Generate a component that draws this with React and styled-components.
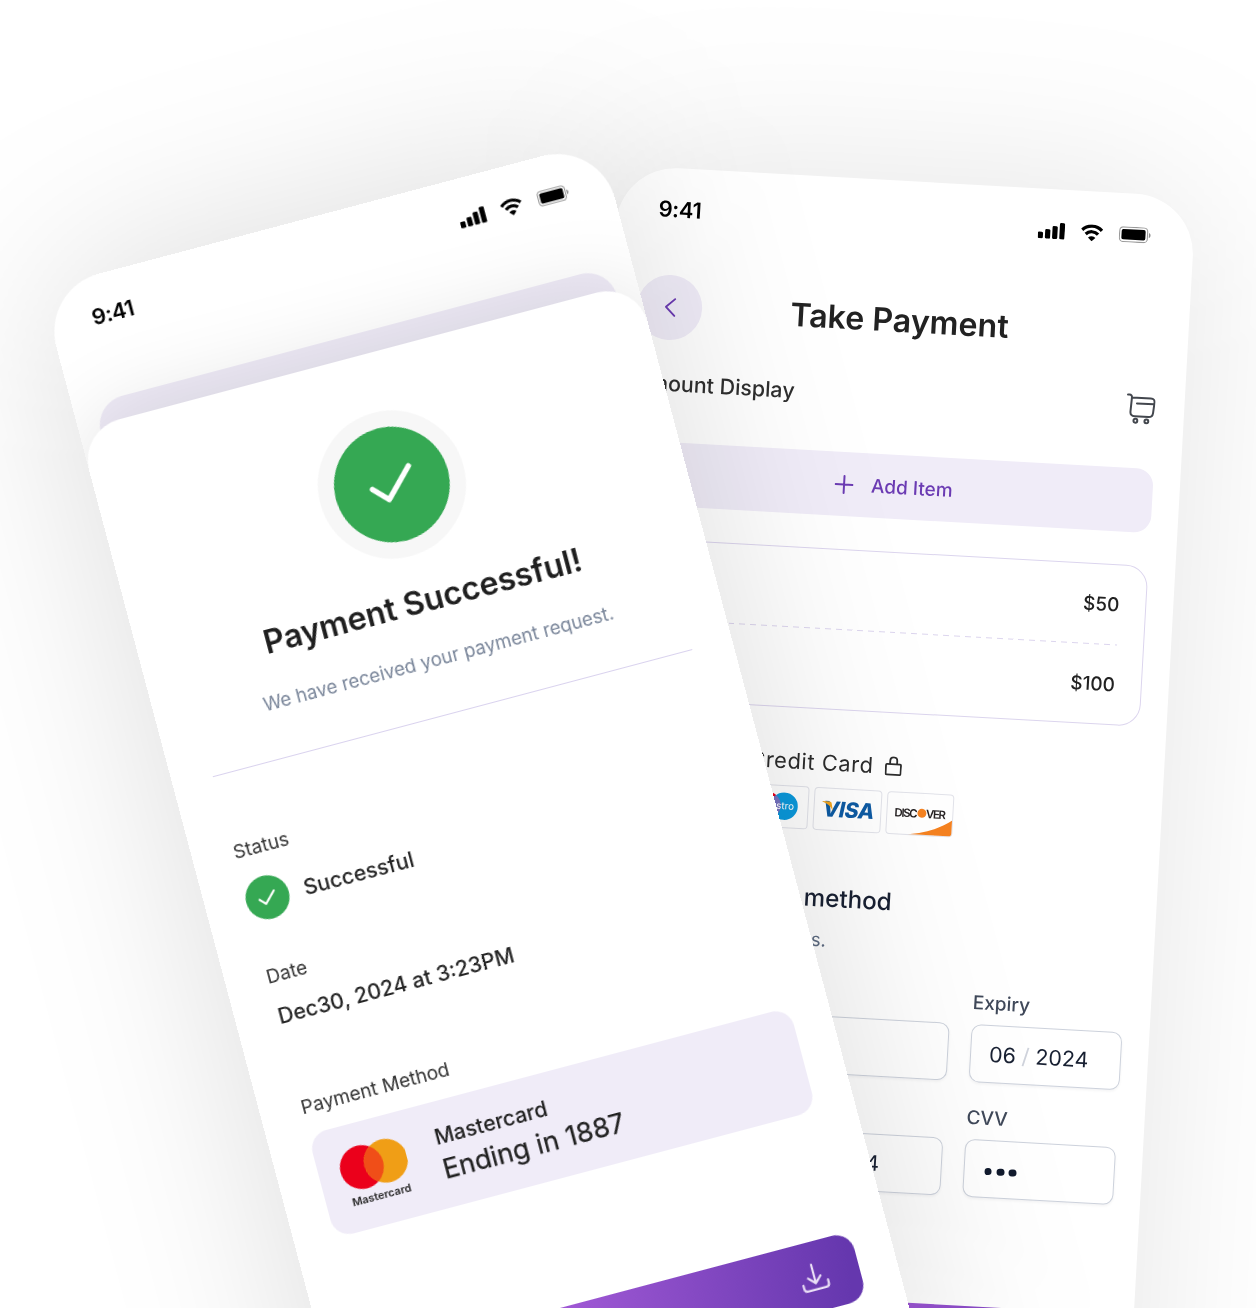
import React from 'react';
import styled, { createGlobalStyle } from 'styled-components';

const GlobalStyle = createGlobalStyle`
  * { box-sizing: border-box; }
  html, body { margin: 0; padding: 0; background: #fff; overflow: hidden; }
  body { font-family: Inter, "Liberation Sans", sans-serif; -webkit-font-smoothing: antialiased; }
`;

const Stage = styled.main`
  position: relative;
  width: 1256px;
  height: 1308px;
  overflow: hidden;
  background: #fff;
`;

const Device = styled.section`
  position: absolute;
  left: ${(p) => p.$x}px;
  top: ${(p) => p.$y}px;
  width: 577.5px;
  height: 1290px;
  transform-origin: 0 0;
  transform: rotate(${(p) => p.$angle}deg);
`;

const DeviceShadow = styled.div`
  position: absolute;
  inset: 0;
  border-radius: 60px;
  background: rgba(0, 0, 0, ${(p) => p.$shade});
  filter: blur(${(p) => p.$blur}px);
  will-change: transform, filter;
`;

const Phone = styled.div`
  position: relative;
  width: 100%;
  height: 100%;
  border-radius: 60px;
  overflow: hidden;
  display: flex;
  flex-direction: column;
  background: #fff;
`;

const StatusBar = styled.header`
  flex: none;
  height: 82px;
  padding: 0 42.5px 0 42px;
  display: flex;
  align-items: center;
  justify-content: space-between;
  color: #000;
`;

const Time = styled.span`
  font-size: 22px;
  font-weight: 600;
  letter-spacing: -0.4px;
`;

const StatusIcons = styled.div`
  display: flex;
  align-items: center;
  gap: 16px;
  svg { display: block; }
`;

/* ---------- Success phone ---------- */

const BackSheet = styled.div`
  flex: none;
  height: 80px;
  margin: 42px 23px 0 21px;
  border-radius: 30px 30px 0 0;
  background: #efebf7;
`;

const Sheet = styled.div`
  flex: 1;
  margin-top: -58.5px;
  padding: 59px 41px 0;
  border-radius: 42px 42px 0 0;
  background: #fff;
  box-shadow: 0 0 90px rgba(0, 0, 0, 0.12);
  display: flex;
  flex-direction: column;
`;

const Seal = styled.div`
  flex: none;
  align-self: center;
  width: ${(p) => p.$size}px;
  height: ${(p) => p.$size}px;
  border-radius: 50%;
  border: ${(p) => p.$ring || 0}px solid #f7f7f7;
  background: #35a853;
  background-clip: padding-box;
  display: grid;
  place-items: center;
`;

const SuccessTitle = styled.h1`
  margin: 27.7px 0 0;
  font-size: 32.2px;
  line-height: 40px;
  font-weight: 600;
  text-align: center;
  color: #1f1f1f;
  white-space: nowrap;
`;

const SuccessNote = styled.p`
  margin: 26.3px 0 0;
  padding-left: 1px;
  font-size: 18.7px;
  line-height: 28px;
  text-align: center;
  color: #7a869a;
  white-space: nowrap;
`;

const Divider = styled.hr`
  width: 100%;
  height: 1px;
  flex: none;
  margin: 41px 0 0;
  border: 0;
  background: #d9d2ee;
`;

const Label = styled.div`
  margin-top: ${(p) => p.$top}px;
  padding-left: 0.6px;
  font-size: 19.05px;
  line-height: 24px;
  color: #333;
`;

const Value = styled.div`
  margin-top: ${(p) => p.$top || 0}px;
  padding-left: ${(p) => p.$indent || 0}px;
  font-size: 21.4px;
  line-height: 28px;
  font-weight: 500;
  color: #262626;
`;

const StatusRow = styled.div`
  margin-top: 17px;
  display: flex;
  align-items: center;
  gap: 16px;
`;

const MethodCard = styled.div`
  flex: none;
  margin: 15.4px -2.5px 0 0.2px;
  height: 107px;
  padding-left: 21.5px;
  border-radius: 19px;
  background: #f0ecf8;
  display: flex;
  align-items: center;
  gap: 31.5px;
`;

const Brand = styled.div`
  display: flex;
  flex-direction: column;
  align-items: center;
  svg { display: block; }
`;

const BrandName = styled.span`
  margin-top: 3px;
  font-size: 11px;
  line-height: 14px;
  font-weight: 600;
  color: #262626;
`;

const CardName = styled.div`
  font-size: 21.3px;
  line-height: 30px;
  font-weight: 500;
  color: #222;
`;

const CardEnding = styled.div`
  margin-top: 1px;
  font-size: 27.3px;
  line-height: 36px;
  color: #222;
  -webkit-text-stroke: 0.25px #222;
`;

const PrimaryButton = styled.div`
  flex: none;
  margin: ${(p) => p.$margin};
  height: 70px;
  padding-right: 31.3px;
  border-radius: 19px;
  background: linear-gradient(${(p) => p.$stops});
  display: flex;
  align-items: center;
  justify-content: flex-end;
`;

/* ---------- Take-payment phone ---------- */

const TopBar = styled.div`
  flex: none;
  margin-top: 24.8px;
  padding: 0 26.4px;
  display: grid;
  grid-template-columns: 65px 1fr 65px;
  align-items: center;
`;

const BackButton = styled.div`
  width: 65px;
  height: 65px;
  border-radius: 50%;
  background: #f0ecf8;
  display: grid;
  place-items: center;
`;

const ScreenTitle = styled.h2`
  margin: 0;
  padding-top: 2px;
  font-size: 32.2px;
  line-height: 40px;
  font-weight: 600;
  text-align: center;
  color: #222;
  white-space: nowrap;
`;

const Body = styled.div`
  flex: 1;
  padding: 0 27px;
  display: flex;
  flex-direction: column;
`;

const AmountRow = styled.div`
  margin-top: 28px;
  height: 30px;
  padding-right: 1.5px;
  display: flex;
  align-items: center;
  justify-content: space-between;
`;

const AmountLabel = styled.span`
  font-size: 21.4px;
  font-weight: 500;
  color: #2e2e2e;
`;

const AddItem = styled.div`
  margin-top: 44.2px;
  height: 64px;
  border-radius: 17px;
  background: #f0ecf8;
  display: flex;
  align-items: center;
  justify-content: center;
  padding: 0.5px 0 0 7px;
  gap: 17.3px;
  font-size: 19px;
  font-weight: 500;
  color: #6b3bb3;
`;

const ItemList = styled.div`
  margin-top: 33px;
  height: 161.5px;
  padding: 0 25.4px 0 25px;
  border: 1.3px solid #dcd5ee;
  border-radius: 22px;
  display: flex;
  flex-direction: column;
`;

const ItemRow = styled.div`
  flex: 1;
  display: flex;
  align-items: center;
  justify-content: flex-end;
  font-size: 19px;
  font-weight: 500;
  color: #222;
`;

const DashedRule = styled.div`
  height: 1.1px;
  margin-top: -1px;
  background: repeating-linear-gradient(
    270deg,
    #dcd5ee 0 2px,
    transparent 2px 7px,
    #dcd5ee 7px 10.75px
  );
`;

const CreditHeader = styled.div`
  margin-top: 38.8px;
  padding-left: 37.3px;
  height: 28px;
  display: flex;
  align-items: center;
  gap: 11px;
  font-size: 21.8px;
  letter-spacing: 0.6px;
  color: #2b2b2b;
`;

const Badges = styled.div`
  margin: 10.3px 0 0 58.5px;
  display: flex;
  gap: 5.2px;
`;

const Badge = styled.div`
  width: 67.3px;
  height: 43px;
  border: 1.3px solid #e2e3ea;
  border-radius: 4px;
  overflow: hidden;
  display: grid;
  place-items: center;
  > * { grid-area: 1 / 1; }
  > svg { display: block; }
`;

const MaestroName = styled.span`
  font-size: 9.8px;
  line-height: 12px;
  color: #fff;
`;

const VisaName = styled.span`
  padding: 0 0 0.5px 1px;
  font-size: 21.4px;
  line-height: 24px;
  font-weight: 800;
  font-style: italic;
  letter-spacing: -0.4px;
  color: #0d5aa3;
`;

const DiscoverName = styled.span`
  padding: 0 1.5px 1.5px 0;
  display: flex;
  align-items: center;
  font-size: 11.4px;
  line-height: 14px;
  font-weight: 600;
  letter-spacing: -1.35px;
  color: #262223;
`;

const DiscoverBall = styled.i`
  width: 9px;
  height: 9px;
  margin: 0 -0.2px 0 1px;
  border-radius: 50%;
  background: #f58220;
`;

const MethodTitle = styled.h3`
  margin: 52px 0 0;
  font-size: 24.25px;
  line-height: 32px;
  font-weight: 500;
  color: #182032;
`;

const MethodNote = styled.p`
  margin: 12px 0 0;
  font-size: 18.75px;
  line-height: 28px;
  color: #5d6b82;
`;

const Fields = styled.div`
  margin-top: 28.6px;
  display: grid;
  grid-template-columns: 1fr 150.5px;
  column-gap: 22px;
  row-gap: 24px;
`;

const FieldLabel = styled.div`
  font-size: 19px;
  line-height: 24px;
  font-weight: 500;
  color: #3f4859;
`;

const Input = styled.div`
  margin-top: 9px;
  height: 58px;
  padding: 0 ${(p) => p.$end || 0}px 0 ${(p) => p.$pad || 18}px;
  border: 1.3px solid #cdd2dc;
  border-radius: 10px;
  box-shadow: 0 1.5px 3px rgba(16, 24, 40, 0.05);
  background: ${(p) => (p.$clear ? 'transparent' : '#fff')};
  display: flex;
  align-items: center;
  justify-content: ${(p) => (p.$end ? 'flex-end' : 'flex-start')};
  gap: ${(p) => p.$gap || 0}px;
  font-size: 21.4px;
  color: #182032;
`;

const Slash = styled.span`
  color: #cfd3dc;
`;

const Dot = styled.i`
  width: 7.4px;
  height: 7.4px;
  margin-top: 5px;
  border-radius: 50%;
  background: #111a2d;
`;

/* ---------- Icons ---------- */

const SignalIcon = () => (
  <svg width="27" height="17" viewBox="0 0 27 17">
    <rect x="0" y="10" width="5.2" height="6.6" rx="1.3" />
    <rect x="7.2" y="7.2" width="5.2" height="9.4" rx="1.3" />
    <rect x="14.4" y="3.8" width="5.2" height="12.8" rx="1.3" />
    <rect x="21.6" y="0.3" width="5.2" height="16.3" rx="1.3" />
  </svg>
);

const WifiIcon = () => (
  <svg width="22" height="17" viewBox="0 0 22 17" fill="none" stroke="#000" strokeWidth="3.2">
    <path d="M1.1 5.9A13.9 13.9 0 0 1 20.9 5.9" />
    <path d="M4.8 9.9A8.7 8.7 0 0 1 17.2 9.9" />
    <path d="M11 16.9L7.3 13.3A5.2 5.2 0 0 1 14.7 13.3Z" fill="#000" stroke="none" />
  </svg>
);

const BatteryIcon = () => (
  <svg width="32" height="16" viewBox="0 0 32 16">
    <rect x="0.6" y="0.7" width="28" height="14.6" rx="3.6" fill="none" stroke="#000" strokeOpacity="0.4" strokeWidth="1.1" />
    <rect x="2.6" y="2.8" width="24" height="10.4" rx="1.8" />
    <path d="M30 5.500v5c1-.4 1.700-1.400 1.700-2.500S31 5.900 30 5.500Z" fillOpacity="0.45" />
  </svg>
);

const CheckIcon = ({ size }) => (
  <svg width={size} height={size} viewBox="-24 -24 48 48" fill="none" stroke="#fff" strokeWidth="5.4" strokeLinecap="round" strokeLinejoin="round">
    <path d="M-20 -.2L-6.3 13.9L20.7 -13.8" />
  </svg>
);

const MastercardMark = () => (
  <svg width="68.7" height="44" viewBox="0 0 68.7 44">
    <circle cx="22" cy="22" r="22" fill="#eb001b" />
    <circle cx="46.7" cy="22" r="22" fill="#f09e16" />
    <path d="M34.35 3.8A22 22 0 0 1 34.35 40.2A22 22 0 0 1 34.35 3.8Z" fill="#f04e18" />
  </svg>
);

const DownloadIcon = () => (
  <svg width="28" height="28" viewBox="0 0 28 28" fill="none" stroke="#eadff6" strokeWidth="2.2" strokeLinecap="round" strokeLinejoin="round">
    <path d="M14 1.5V20.5M7.6 14.2L14 20.6L20.4 14.2" />
    <path d="M1.3 20V23.4C1.3 25.7 2.4 26.8 4.7 26.8H23.3C25.6 26.8 26.7 25.7 26.7 23.4V20" />
  </svg>
);

const ChevronIcon = () => (
  <svg width="24" height="24" viewBox="0 0 24 24" fill="none" stroke="#6b3bb3" strokeWidth="1.9" strokeLinecap="round" strokeLinejoin="round">
    <path d="M16.6 3.8L7.8 12L16.6 20.6" />
  </svg>
);

const CartIcon = () => (
  <svg width="29" height="31" viewBox="0 0 29 31" fill="none" stroke="#43474e" strokeWidth="2" strokeLinecap="round" strokeLinejoin="round">
    <path d="M1 1.7H2.5C4.2 1.7 5.2 2.8 5.1 4.5L4.4 18.6C4.3 21.6 5.8 23.2 8.8 23.2H22.6C25.3 23.2 26.7 21.8 27 19.2L27.9 9C28.2 6 26.9 4.5 24 4.5H5.3" />
    <path d="M10.4 10.2H27.4" />
    <circle cx="9.8" cy="27.6" r="1.9" />
    <circle cx="20.8" cy="27.6" r="1.9" />
  </svg>
);

const PlusIcon = () => (
  <svg width="19" height="19" viewBox="0 0 19 19" fill="none" stroke="#6b3bb3" strokeWidth="2" strokeLinecap="round">
    <path d="M9.5 1V18M1 9.5H18" />
  </svg>
);

const LockIcon = () => (
  <svg width="17" height="20" viewBox="0 0 17 20" fill="none" stroke="#2b2b2b" strokeWidth="1.8" strokeLinejoin="round">
    <rect x="1" y="8" width="15" height="10.6" rx="1" />
    <path d="M5 8V4.6C5 2.6 6.5 1.1 8.5 1.1S12 2.6 12 4.6V8" />
  </svg>
);

const MastercardSmall = () => (
  <svg width="46" height="28" viewBox="0 0 46 28">
    <circle cx="14" cy="14" r="13.7" fill="#eb001b" />
    <circle cx="32" cy="14" r="13.7" fill="#f79e1b" />
  </svg>
);

const MaestroMark = () => (
  <svg width="46" height="28" viewBox="0 0 46 28">
    <circle cx="14.5" cy="14" r="13.7" fill="#eb001b" />
    <circle cx="31.5" cy="14" r="13.7" fill="#0a99dc" />
    <path d="M23 3.26A13.7 13.7 0 0 1 23 24.74A13.7 13.7 0 0 1 23 3.26Z" fill="#7673c0" />
  </svg>
);

const VisaAccent = () => (
  <svg width="66" height="42" viewBox="0 0 66 42">
    <path d="M7.600 12.800H14.600C15.900 12.800 16.600 13.400 16.900 14.600L18.400 22.200C16.600 18 12.800 14.800 7.600 13.300Z" fill="#f2a51e" />
  </svg>
);

const DiscoverSwoosh = () => (
  <svg width="66" height="42" viewBox="0 0 66 42">
    <path d="M15 42C36 40 54 34 66 24.5V42Z" fill="#f58220" />
  </svg>
);

const PhoneStatus = () => (
  <StatusBar>
    <Time>9:41</Time>
    <StatusIcons>
      <SignalIcon />
      <WifiIcon />
      <BatteryIcon />
    </StatusIcons>
  </StatusBar>
);

function TakePaymentScreen() {
  return (
    <Device $x={618.6} $y={165} $angle={3.19}>
      <DeviceShadow $shade={0.105} $blur={88} />
      <Phone>
        <PhoneStatus />
        <TopBar>
          <BackButton><ChevronIcon /></BackButton>
          <ScreenTitle>Take Payment</ScreenTitle>
        </TopBar>
        <Body>
          <AmountRow>
            <AmountLabel>Amount Display</AmountLabel>
            <CartIcon />
          </AmountRow>
          <AddItem><PlusIcon />Add Item</AddItem>
          <ItemList>
            <ItemRow>$50</ItemRow>
            <DashedRule />
            <ItemRow>$100</ItemRow>
          </ItemList>
          <CreditHeader>Pay with Credit Card<LockIcon /></CreditHeader>
          <Badges>
            <Badge><MastercardSmall /></Badge>
            <Badge><MaestroMark /><MaestroName>maestro</MaestroName></Badge>
            <Badge><VisaName>VISA</VisaName><VisaAccent /></Badge>
            <Badge>
              <DiscoverSwoosh />
              <DiscoverName>DISC<DiscoverBall />VER</DiscoverName>
            </Badge>
          </Badges>
          <MethodTitle>Update payment method</MethodTitle>
          <MethodNote>Update your card details.</MethodNote>
          <Fields>
            <div>
              <FieldLabel>Name on card</FieldLabel>
              <Input $clear />
            </div>
            <div>
              <FieldLabel>Expiry</FieldLabel>
              <Input $gap={6}><span>06</span><Slash>/</Slash><span>2024</span></Input>
            </div>
            <div>
              <FieldLabel>Card number</FieldLabel>
              <Input $clear $end={61.5}>1234 1234 1234 1234</Input>
            </div>
            <div>
              <FieldLabel>CVV</FieldLabel>
              <Input $pad={20} $gap={4.8}><Dot /><Dot /><Dot /></Input>
            </div>
          </Fields>
          <PrimaryButton $margin="108.5px 0 0" $stops="100deg, #b565e6 0%, #a85bdc 52%, #6537ae 100%" />
        </Body>
      </Phone>
    </Device>
  );
}

function SuccessScreen() {
  return (
    <Device $x={40.7} $y={288.9} $angle={-14.86}>
      <DeviceShadow $shade={0.138} $blur={90} />
      <Phone>
        <PhoneStatus />
        <BackSheet />
        <Sheet>
          <Seal $size={148} $ring={16}><CheckIcon size={48} /></Seal>
          <SuccessTitle>Payment Successful!</SuccessTitle>
          <SuccessNote>We have received your payment request.</SuccessNote>
          <Divider />
          <Label $top={67}>Status</Label>
          <StatusRow>
            <Seal $size={43.5}><CheckIcon size={19} /></Seal>
            <Value>Successful</Value>
          </StatusRow>
          <Label $top={44}>Date</Label>
          <Value $top={14.2} $indent={1.8}>Dec30, 2024 at 3:23PM</Value>
          <Label $top={68.8}>Payment Method</Label>
          <MethodCard>
            <Brand>
              <MastercardMark />
              <BrandName>Mastercard</BrandName>
            </Brand>
            <div>
              <CardName>Mastercard</CardName>
              <CardEnding>Ending in 1887</CardEnding>
            </div>
          </MethodCard>
          <PrimaryButton $margin="124.8px -3px 0 0" $stops="100deg, #b061e0 0%, #9d57d3 43%, #6537ae 97%">
            <DownloadIcon />
          </PrimaryButton>
        </Sheet>
      </Phone>
    </Device>
  );
}

export default function App() {
  return (
    <>
      <GlobalStyle />
      <Stage>
        <TakePaymentScreen />
        <SuccessScreen />
      </Stage>
    </>
  );
}
